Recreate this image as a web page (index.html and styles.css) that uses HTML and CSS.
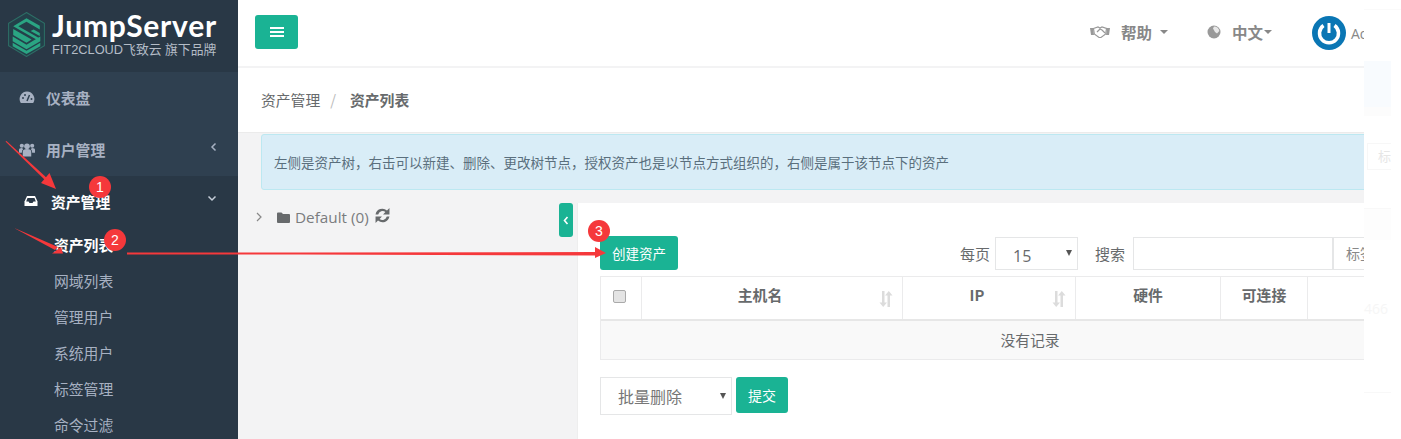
FILE: index.html
```html
<!DOCTYPE html>
<html lang="zh">
<head>
<meta charset="utf-8">
<title>JumpServer</title>
<link rel="stylesheet" href="styles.css">
</head>
<body>
<div class="app">
  <aside class="sidebar">
    <div class="brand">
      <svg class="brand-mark" width="37" height="45" viewBox="2 1 36 44">
        <path d="M20 1.500 37.500 12v22L20 44.500 2.500 34V12Z" fill="#24404a" stroke="#2d6f66" stroke-width="1"/>
        <path d="M20 7 33 14.500v3.500L20 10.500 12 15l21 12-2 1.500L7 15Z" fill="#2aa583"/>
        <path d="M7 17.500 25 28l-5 3L7 23.500ZM33 21.500v3L24 19.500l3-1.500Z" fill="#2aa583"/>
        <path d="M6.500 25 20 33l13.500-8v4.500L20 37.500 6.500 29.500Z" fill="#2aa583"/>
        <path d="M6.500 31 20 39l13.500-8v3.500L20 42 6.500 34.500Z" fill="#2aa583"/>
      </svg>
      <div class="brand-text">
        <div class="brand-name">JumpServer</div>
        <div class="brand-sub">FIT2CLOUD飞致云 旗下品牌</div>
      </div>
    </div>
    <nav class="nav">
      <a class="nav-item">
        <svg class="nav-icon" width="16" height="14" viewBox="0 0 16 14"><path d="M8 1.500A7.500 7.500 0 0 0 1.800 13h12.400A7.500 7.500 0 0 0 8 1.500Z" fill="#a7b1c2"/><path d="M8 11 10.500 5" stroke="#2f4050" stroke-width="1.500"/><circle cx="4" cy="8" r="1" fill="#2f4050"/><circle cx="6" cy="5" r="1" fill="#2f4050"/><circle cx="12.500" cy="9" r="1" fill="#2f4050"/></svg>
        <span>仪表盘</span>
      </a>
      <a class="nav-item">
        <svg class="nav-icon" width="17" height="15" viewBox="0 0 17 15"><circle cx="8.500" cy="4" r="3" fill="#a7b1c2"/><circle cx="3" cy="3.500" r="2.200" fill="#a7b1c2"/><circle cx="14" cy="3.500" r="2.200" fill="#a7b1c2"/><path d="M4 15V10q0-3 4.500-3T13 10v5Z" fill="#a7b1c2"/><path d="M0 11V8q0-2 3-2l1.500 1Q3 8 3 11ZM17 11V8q0-2-3-2l-1.500 1Q14 8 14 11Z" fill="#a7b1c2"/></svg>
        <span>用户管理</span>
        <svg class="nav-caret" width="7" height="10" viewBox="0 0 7 10"><path d="M5.500 1.500 2 5l3.500 3.500" fill="none" stroke="#a7b1c2" stroke-width="1.500"/></svg>
      </a>
      <div class="nav-group">
        <a class="nav-item nav-active">
          <svg class="nav-icon" width="15" height="12" viewBox="0 0 15 12"><path d="M3.500 1h8L14 6.500V11H1V6.500Z" fill="#fff"/><path d="M4 3h7l1.300 3.500H10L9 8H6L5 6.500H2.700Z" fill="#293846"/></svg>
          <span>资产管理</span>
          <svg class="nav-caret" width="10" height="7" viewBox="0 0 10 7"><path d="M1.500 1.500 5 5l3.500-3.500" fill="none" stroke="#c6ced9" stroke-width="1.500"/></svg>
        </a>
        <ul class="subnav">
          <li class="sub-active">资产列表</li>
          <li>网域列表</li>
          <li>管理用户</li>
          <li>系统用户</li>
          <li>标签管理</li>
          <li>命令过滤</li>
        </ul>
      </div>
    </nav>
  </aside>

  <main class="main">
    <header class="topbar">
      <button class="menu-btn" type="button" aria-label="菜单">
        <svg width="14" height="12" viewBox="0 0 14 12"><path d="M0 1h14v2H0ZM0 5h14v2H0ZM0 9h14v2H0Z" fill="#fff"/></svg>
      </button>
      <div class="top-links">
        <span class="top-link help">
          <svg width="22" height="14" viewBox="0 0 22 14"><path d="M1 3h3l1 7H2ZM21 3h-3l-1 7h3Z" fill="#999"/><path d="M4.500 3.500 9 2l2 1 2-1 4.500 1.500-.8 5.500-4.700 3.500-2 0L5.300 9Z" fill="none" stroke="#999" stroke-width="1.200"/><path d="M8 7l3-3 2 1 3 3" fill="none" stroke="#999" stroke-width="1.200"/></svg>
          <span>帮助</span><i class="caret"></i>
        </span>
        <span class="top-link lang">
          <svg width="14" height="14" viewBox="0 0 14 14"><circle cx="7" cy="7" r="6.500" fill="#999"/><path d="M7 1.500c3 0 5 2 5.300 4.500L10 8.500 8 7 6 3.500Z" fill="#e8e8e8"/></svg>
          <span>中文</span><i class="caret caret-tight"></i>
        </span>
        <span class="user">
          <svg width="34" height="34" viewBox="0 0 34 34"><circle cx="17" cy="17" r="17" fill="#0a76b4"/><path d="M11.500 9.500a9.500 9.500 0 1 0 11 0" fill="none" stroke="#fff" stroke-width="3.500"/><path d="M17 7v10" stroke="#fff" stroke-width="3"/></svg>
          <span class="user-name">Admin</span>
        </span>
      </div>
    </header>

    <div class="crumbs">
      <span>资产管理</span><span class="crumb-sep">/</span><strong>资产列表</strong>
    </div>

    <section class="content">
      <div class="alert">左侧是资产树，右击可以新建、删除、更改树节点，授权资产也是以节点方式组织的，右侧是属于该节点下的资产</div>
      <div class="workspace">
        <div class="tree">
          <svg class="tree-arrow" width="6" height="10" viewBox="0 0 6 10"><path d="M1 1l4 4-4 4" fill="none" stroke="#888" stroke-width="1.200"/></svg>
          <svg class="tree-folder" width="13" height="11" viewBox="0 0 13 11"><path d="M0 1.500Q0 .5 1 .5h3.500l1.500 1.500h6q1 0 1 1V10q0 1-1 1H1q-1 0-1-1Z" fill="#676a6c"/></svg>
          <span class="tree-label">Default (0)</span>
          <svg class="tree-refresh" width="15" height="15" viewBox="0 0 14 14"><path d="M.5 6a6.500 6.500 0 0 1 10.700-3.700L13.500 0v6h-6l2.200-2.200A4.200 4.200 0 0 0 3 6ZM13.500 8A6.500 6.500 0 0 1 2.800 11.700L.5 14V8h6l-2.200 2.200A4.200 4.200 0 0 0 11 8Z" fill="#676a6c"/></svg>
        </div>
        <button class="tree-toggle" type="button" aria-label="收起">
          <svg width="6" height="9" viewBox="0 0 6 9"><path d="M4.500 1 1.500 4.500 4.500 8" fill="none" stroke="#fff" stroke-width="1.600"/></svg>
        </button>
        <div class="panel">
          <div class="toolbar">
            <button class="btn" type="button">创建资产</button>
            <div class="filters">
              <label>每页</label>
              <div class="select-box size-box"><span>15</span><i class="sel-arrow"></i></div>
              <label class="search-label">搜索</label>
              <div class="search-box"></div>
              <div class="tag-box">标签</div>
            </div>
          </div>
          <div class="table">
            <div class="tr thead">
              <div class="c c-check"><span class="check"></span></div>
              <div class="c c-host">主机名<svg class="sort" width="14" height="16" viewBox="0 0 14 16"><path d="M3 0h2.500v11.500H8L4.200 16 .5 11.500H3ZM8.500 16V4.500H6L9.800 0l3.700 4.500H11V16Z" fill="#dcdcdc"/></svg></div>
              <div class="c c-ip">IP<svg class="sort" width="14" height="16" viewBox="0 0 14 16"><path d="M3 0h2.500v11.500H8L4.200 16 .5 11.500H3ZM8.500 16V4.500H6L9.800 0l3.700 4.500H11V16Z" fill="#dcdcdc"/></svg></div>
              <div class="c c-hw">硬件</div>
              <div class="c c-conn">可连接</div>
              <div class="c c-rest"></div>
            </div>
            <div class="tr empty">没有记录</div>
          </div>
          <div class="bulk">
            <div class="select-box bulk-box"><span>批量删除</span><i class="sel-arrow"></i></div>
            <button class="btn btn-submit" type="button">提交</button>
          </div>
        </div>
      </div>
    </section>
  </main>

  <div class="strip">
    <div class="strip-top"></div>
    <div class="strip-band"></div>
    <div class="strip-band2"></div>
    <div class="strip-tag">标</div>
    <div class="strip-band3"></div>
    <div class="strip-num">466</div>
    <div class="strip-box"></div>
  </div>
</div>

<svg class="marks" width="1401" height="439" viewBox="0 0 1401 439">
  <path d="M5.500 141.500 6.500 141 48 179 46 181Z" fill="#f5383b"/>
  <path d="M41 183 56 189 49.500 173Z" fill="#f5383b"/>
  <path d="M15 228.500 15.500 228.500 58 247 55 250Z" fill="#f5383b"/>
  <path d="M52 253.500 63 253.500 61 247Z" fill="#f5383b"/>
  <path d="M127 252.500H300L596 252V255.500L300 254.500H127Z" fill="#f5383b"/>
  <path d="M595 247 606 253 595 258Z" fill="#f5383b"/>
</svg>
<div class="pin pin-1">1</div>
<div class="pin pin-2">2</div>
<div class="pin pin-3">3</div>
</body>
</html>
```
FILE: styles.css
```css
* { box-sizing: border-box; }
html, body { margin: 0; padding: 0; height: 439px; overflow: hidden; background: #fff; }
body {
  position: relative;
  font-family: "Open Sans", "Noto Sans CJK SC", sans-serif;
  font-size: 15px;
  color: #676a6c;
}
.app { display: flex; width: 1401px; height: 439px; overflow: hidden; }

/* Sidebar */
.sidebar { flex: 0 0 238px; background: #2f4050; overflow: hidden; }
.brand {
  height: 72px;
  background: #293846;
  display: flex;
  align-items: flex-start;
  gap: 7px;
  padding: 10px 0 0 8px;
}
.brand-mark { margin-top: 2px; }
.brand-text { width: 170px; }
.brand-name {
  font-family: "Lato", sans-serif;
  font-weight: 700;
  font-size: 30px;
  line-height: 30px;
  letter-spacing: .75px;
  color: #fff;
}
.brand-sub {
  font-family: "Liberation Sans", "Noto Sans CJK SC", sans-serif;
  font-size: 12.800px;
  line-height: 16px;
  margin-top: 2px;
  color: #b4bcc6;
  white-space: nowrap;
}
.nav-item {
  display: flex;
  align-items: center;
  height: 52px;
  padding: 0 21px 2px 19px;
  color: #a7b1c2;
  font-weight: 700;
  font-size: 14.800px;
  font-family: "Noto Sans CJK SC", sans-serif;
}
.nav-icon { flex: 0 0 auto; width: 16px; margin-right: 11px; }
.nav-caret { margin-left: auto; margin-top: -5px; }
.nav-group { background: #293846; height: 300px; }
.nav-active { color: #fff; padding-left: 23px; }
.nav-active .nav-icon { margin-right: 12px; }
.subnav {
  list-style: none;
  margin: -1px 0 0;
  padding: 0 0 0 54px;
  color: #a7b1c2;
  font-size: 14.800px;
  font-family: "Noto Sans CJK SC", sans-serif;
}
.subnav li { height: 36px; line-height: 36px; }
.subnav .sub-active { color: #fff; font-weight: 700; }

/* Main column */
.main { flex: 0 0 1126px; min-width: 0; display: flex; flex-direction: column; background: #f3f3f4; overflow: hidden; }
.topbar {
  flex: 0 0 68px;
  background: #fff;
  border-bottom: 2px solid #f3f3f4;
  display: flex;
  align-items: flex-start;
  justify-content: space-between;
  padding: 15px 0 0 17px;
}
.menu-btn {
  width: 43px;
  height: 34px;
  padding: 0;
  border: 0;
  border-radius: 3px;
  background: #1ab394;
  display: flex;
  align-items: center;
  justify-content: center;
}
.top-links { display: flex; align-items: center; margin-top: 1px; color: #888; font-weight: 700; font-size: 15.500px; font-family: "Noto Sans CJK SC", sans-serif; }
.top-link { display: flex; align-items: center; }
.help { margin-top: -2px; width: 118px; gap: 10px; }
.lang { margin-top: -2px; width: 105px; gap: 11px; }
.caret {
  width: 0; height: 0;
  border-left: 4px solid transparent;
  border-right: 4px solid transparent;
  border-top: 4px solid #888;
  margin-left: -2px;
}
.caret-tight { margin-left: -10px; }
.user { display: flex; align-items: center; gap: 5px; width: 52px; white-space: nowrap; }
.user svg { flex: 0 0 auto; }
.user-name { font-family: "Open Sans", sans-serif; font-weight: 400; font-size: 14px; color: #888; }
.crumbs {
  flex: 0 0 65px;
  background: #fff;
  display: flex;
  align-items: center;
  padding: 0 0 2px 23px;
  border-bottom: 1px solid #ebebeb;
  font-family: "Noto Sans CJK SC", sans-serif;
  font-size: 14.800px;
}
.crumb-sep { margin: 0 14px 0 10px; color: #bbb; }
.crumbs strong { font-weight: 700; color: #676a6c; }
.content { flex: 1; padding-left: 23px; min-height: 0; }
.alert {
  height: 56px;
  margin-top: 1px;
  width: 1120px;
  padding: 0 0 0 12px;
  display: flex;
  align-items: center;
  background: #d9edf7;
  border: 1px solid #bce8f1;
  border-radius: 3px 0 0 3px;
  color: #5a6f7d;
  font-size: 13.500px;
  font-family: "Noto Sans CJK SC", sans-serif;
}
.workspace { display: flex; align-items: flex-start; margin-top: 12px; }
.tree { flex: 0 0 298px; display: flex; align-items: center; height: 30px; }
.tree-arrow { margin: 0 15px 0 -5px; }
.tree-folder { margin-right: 5px; }
.tree-label { color: #7a7c7e; font-size: 15.300px; }
.tree-refresh { margin: -4px 0 0 6px; }
.tree-toggle {
  flex: 0 0 14px;
  height: 34px;
  padding: 0;
  border: 0;
  border-radius: 3px;
  background: #1ab394;
  display: flex;
  align-items: center;
  justify-content: center;
  margin-top: 1px;
}
.panel { flex: 0 0 800px; height: 240px; margin: 1px 0 0 4px; background: #fff; padding: 33px 0 0 22px; border-left: 1px solid #eee; }
.toolbar { display: flex; align-items: flex-start; height: 40px; }
.btn {
  height: 34px;
  width: 78px;
  padding: 0;
  border: 0;
  border-radius: 3px;
  background: #1ab394;
  color: #fff;
  font: 13.500px "Noto Sans CJK SC", sans-serif;
}
.filters { display: flex; align-items: center; margin: 1px 0 0 282px; font-size: 15px; font-family: "Noto Sans CJK SC", sans-serif; }
.select-box { position: relative; background: #fff; border: 1px solid #e5e6e7; display: flex; align-items: center; }
.size-box { width: 83px; height: 33px; margin-left: 5px; padding: 4px 0 0 17px; font-family: "Open Sans", sans-serif; font-size: 16px; }
.sel-arrow {
  position: absolute;
  right: 5px;
  top: 12px;
  width: 0; height: 0;
  border-left: 3.500px solid transparent;
  border-right: 3.500px solid transparent;
  border-top: 6px solid #555;
}
.search-label { margin-left: 17px; }
.search-box { width: 200px; height: 33px; margin-left: 8px; border: 1px solid #e5e6e7; background: #fff; }
.tag-box { width: 40px; height: 33px; line-height: 31px; padding-left: 12px; border: 1px solid #e5e6e7; border-right: 0; overflow: hidden; white-space: nowrap; font-size: 14px; color: #888; }
.table { width: 860px; border: 1px solid #ebebec; }
.tr { display: flex; }
.thead { height: 44px; border-bottom: 2px solid #e7e7e7; font-weight: 700; font-size: 14.800px; font-family: "Noto Sans CJK SC", sans-serif; }
.c { position: relative; display: flex; align-items: center; justify-content: center; border-right: 1px solid #ebebec; padding-bottom: 7px; }
.c-check { flex: 0 0 41px; padding: 0 3px 4px 0; }
.c-host { flex: 0 0 261px; padding-right: 24px; }
.c-ip { flex: 0 0 173px; padding-right: 24px; }
.c-hw { flex: 0 0 145px; }
.c-conn { flex: 0 0 87px; }
.c-rest { flex: 1; border-right: 0; }
.check { width: 13px; height: 13px; border: 1px solid #aaa; border-radius: 2px; background: #e4e4e4; }
.sort { position: absolute; right: 9px; top: 14px; }
.empty { height: 38px; padding-bottom: 2px; align-items: center; justify-content: center; background: #f9f9f9; font-size: 14.800px; font-family: "Noto Sans CJK SC", sans-serif; }
.bulk { display: flex; align-items: flex-start; margin-top: 17px; }
.bulk-box { width: 132px; height: 38px; padding-left: 17px; font-family: "Noto Sans CJK SC", sans-serif; font-size: 16px; color: #777; }
.bulk-box .sel-arrow { top: 15px; }
.btn-submit { width: 52px; height: 36px; margin-left: 4px; font-size: 14px; }

/* Washed-out strip at right edge */
.strip { flex: 0 0 37px; background: #fff; }
.strip-top { height: 10px; border-bottom: 1px solid #fafafa; }
.strip-band { height: 46px; margin: 51px 10px 0 0; background: #f8fbfe; }
.strip-band2 { height: 9px; margin-right: 10px; background: #fcfcfc; }
.strip-tag { height: 27px; margin: 27px 10px 0 3px; border: 1px solid #f7f7f7; border-right: 0; padding-left: 10px; line-height: 25px; font-size: 13px; color: #e6e6e6; overflow: hidden; white-space: nowrap; }
.strip-band3 { height: 32px; margin: 38px 10px 0 0; background: #fdfdfd; border-top: 1px solid #f8f8f8; }
.strip-num { height: 18px; margin-top: 60px; line-height: 18px; font-size: 14px; color: #f6f6f6; }
.strip-box { height: 36px; margin: 74px 10px 0 0; border-top: 1px solid #f8f8f8; background: #fff; }

/* Annotations laid over the screenshot */
.marks { position: absolute; left: 0; top: 0; pointer-events: none; }
.pin {
  position: absolute;
  width: 22px;
  height: 22px;
  border-radius: 50%;
  background: #f5383b;
  color: #fff;
  font: 14px/22px "Liberation Sans", sans-serif;
  text-align: center;
}
.pin-1 { left: 89px; top: 176px; }
.pin-2 { left: 104px; top: 229px; }
.pin-3 { left: 588px; top: 220px; }
```
